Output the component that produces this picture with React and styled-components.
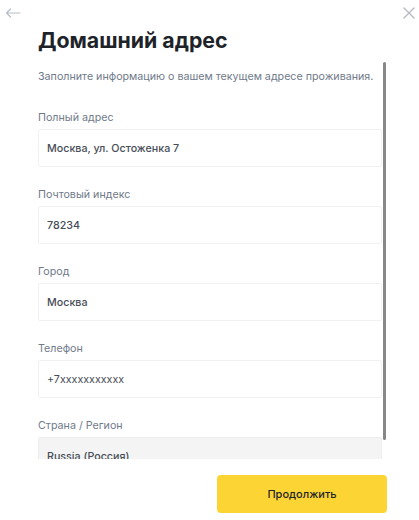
import styled, { createGlobalStyle } from "styled-components";

const GlobalStyle = createGlobalStyle`
  html, body {
    margin: 0;
    padding: 0;
    background: #ffffff;
  }
  body {
    font-family: Inter, "Noto Sans", "Liberation Sans", sans-serif;
    color: #1e2329;
  }
`;

const fields = [
  { label: "Полный адрес", value: "Москва, ул. Остоженка 7" },
  { label: "Почтовый индекс", value: "78234" },
  { label: "Город", value: "Москва" },
  { label: "Телефон", value: "+7xxxxxxxxxxx", light: true },
  { label: "Страна / Регион", value: "Russia (Россия)", disabled: true },
];

const THUMB_RATIO = 378 / 397;

function App() {
  return (
    <Page>
      <GlobalStyle />
      <TopBar>
        <IconButton aria-label="back">
          <svg width="16" height="12" viewBox="0 0 16 12" fill="none">
            <path
              d="M15 6H1.5M5.5 2L1.5 6l4 4"
              stroke="#b7bdc6"
              strokeWidth="1.2"
              strokeLinecap="round"
              strokeLinejoin="round"
            />
          </svg>
        </IconButton>
        <IconButton aria-label="close">
          <svg width="12" height="12" viewBox="0 0 12 12" fill="none">
            <path
              d="M1 1l10 10M11 1L1 11"
              stroke="#b3b9c1"
              strokeWidth="1.3"
              strokeLinecap="round"
            />
          </svg>
        </IconButton>
      </TopBar>
      <Title>Домашний адрес</Title>
      <ScrollArea>
        <Scroll>
          <Intro>Заполните информацию о вашем текущем адресе проживания.</Intro>
          {fields.map((f) => (
            <Field key={f.label}>
              <Label>{f.label}</Label>
              <Input disabled={f.disabled} light={f.light}>
                {f.value}
              </Input>
            </Field>
          ))}
        </Scroll>
        <Thumb style={{ height: `${THUMB_RATIO * 100}%` }} />
      </ScrollArea>
      <Footer>
        <PrimaryButton>Продолжить</PrimaryButton>
      </Footer>
    </Page>
  );
}

export default App;

const Page = styled.div`
  width: 419px;
  height: 520px;
  display: flex;
  flex-direction: column;
  overflow: hidden;
`;

const TopBar = styled.div`
  height: 26px;
  display: flex;
  align-items: center;
  justify-content: space-between;
  padding: 0 4px 0 5px;
`;

const IconButton = styled.button`
  display: flex;
  align-items: center;
  justify-content: center;
  padding: 0;
  border: none;
  background: none;
  cursor: pointer;
`;

const Title = styled.h1`
  margin: 0 0 8px 38px;
  font-size: 21.3px;
  line-height: 28px;
  font-weight: 700;
  color: #1e2329;
`;

const ScrollArea = styled.div`
  position: relative;
  margin-left: 38px;
  width: 349px;
  height: 397px;
`;

const Scroll = styled.div`
  height: 100%;
  overflow-y: auto;
  box-sizing: border-box;
  padding-top: 7px;
  scrollbar-width: none;
  &::-webkit-scrollbar {
    display: none;
  }
`;

const Thumb = styled.div`
  position: absolute;
  top: 0;
  right: 1px;
  width: 3px;
  border-radius: 2px;
  background: #878787;
`;

const Intro = styled.p`
  margin: 0 0 25px;
  font-size: 10.7px;
  line-height: 16px;
  color: #707a8a;
  white-space: nowrap;
`;

const Field = styled.div`
  display: flex;
  flex-direction: column;
  width: 344px;
  margin-bottom: 20px;
`;

const Label = styled.label`
  font-size: 10.7px;
  line-height: 16px;
  margin-bottom: 3px;
  color: #707a8a;
`;

const Input = styled.div`
  height: 38px;
  box-sizing: border-box;
  display: flex;
  align-items: center;
  padding: 0 8px;
  border: 1px solid ${(p) => (p.disabled ? "#eeeeee" : "#f0f1f2")};
  border-radius: 2px;
  background: ${(p) => (p.disabled ? "#f4f4f4" : "#ffffff")};
  font-size: 10.7px;
  font-weight: ${(p) => (p.light ? 400 : 500)};
  color: #474d57;
`;

const Footer = styled.div`
  flex: 1;
  display: flex;
  justify-content: flex-end;
  align-items: flex-start;
  padding: 16px 32px 0 0;
`;

const PrimaryButton = styled.button`
  width: 170px;
  height: 38px;
  border: none;
  border-radius: 4px;
  background: #fcd535;
  font-family: Inter, "Noto Sans", "Liberation Sans", sans-serif;
  font-size: 11px;
  font-weight: 500;
  color: #1e2329;
  cursor: pointer;
`;
